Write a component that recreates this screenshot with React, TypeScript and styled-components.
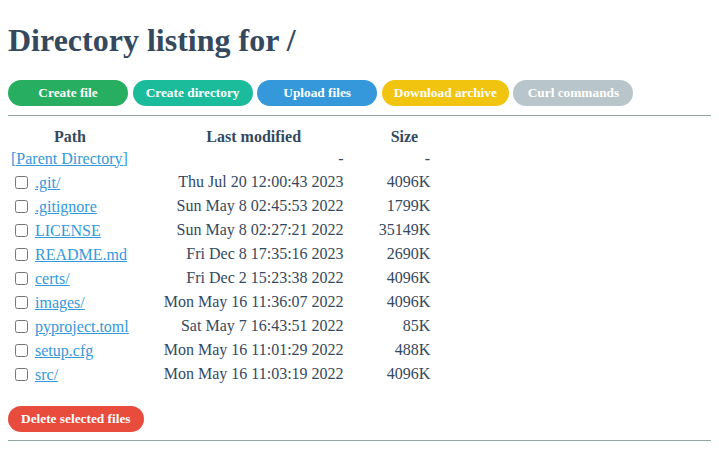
import styled, {createGlobalStyle} from "styled-components"

const GlobalStyle = createGlobalStyle`
    html, body {
        background: #fff;
    }
    body {
        margin: 8px;
        font-family: "Liberation Serif", "Times New Roman", serif;
        color: #34495e;
    }
`

const Title = styled.h1`
    font-size: 32px;
    font-weight: 700;
    margin: 14px 0 21px;
    color: #34495e;
`

const Toolbar = styled.div`
    display: flex;
    gap: 4.6px;
`

const PillButton = styled.button<{color: string}>`
    min-width: 120px;
    height: 26px;
    padding: 0 12px;
    border: 0;
    border-radius: 13px;
    background: ${(props) => props.color};
    color: #fff;
    font-family: "Liberation Serif", "Times New Roman", serif;
    font-size: 13.33px;
    font-weight: 700;
    cursor: pointer;
`

const Rule = styled.div<{gap?: number}>`
    height: 0;
    border-top: 1px solid #95a5a6;
    margin: ${(props) => props.gap ?? 9}px -8px 0 0;
`

const Listing = styled.table`
    border-spacing: 2px;
    font-size: 16px;
    margin-top: 8px;
`

const Head = styled.th<{wide?: boolean}>`
    font-weight: 700;
    text-align: center;
    padding: 2px 1px 0 ${(props) => (props.wide ? "32px" : "1px")};
`

const Cell = styled.td<{right?: boolean; wide?: boolean}>`
    text-align: ${(props) => (props.right ? "right" : "left")};
    padding: 1px 1px 1px ${(props) => (props.wide ? "32px" : "1px")};
    height: 20px;
    white-space: nowrap;
`

const ParentRow = styled.tr`
    & > td {
        height: 19px;
    }
`

const FileLink = styled.a`
    color: #3498db;
    text-decoration: underline;
`

const Check = styled.input`
    margin: 3px 3px 3px 4px;
    vertical-align: -1px;
`

const DeleteButton = styled(PillButton)`
    display: block;
    min-width: 0;
    padding: 0 13px;
    margin-top: 19px;
`

const files = [
    [".git/", "Thu Jul 20 12:00:43 2023", "4096K"],
    [".gitignore", "Sun May 8 02:45:53 2022", "1799K"],
    ["LICENSE", "Sun May 8 02:27:21 2022", "35149K"],
    ["README.md", "Fri Dec 8 17:35:16 2023", "2690K"],
    ["certs/", "Fri Dec 2 15:23:38 2022", "4096K"],
    ["images/", "Mon May 16 11:36:07 2022", "4096K"],
    ["pyproject.toml", "Sat May 7 16:43:51 2022", "85K"],
    ["setup.cfg", "Mon May 16 11:01:29 2022", "488K"],
    ["src/", "Mon May 16 11:03:19 2022", "4096K"],
]

export default function App() {
    return (
        <>
            <GlobalStyle />
            <Title>Directory listing for /</Title>
            <Toolbar>
                <PillButton color="#27ae60">Create file</PillButton>
                <PillButton color="#1abc9c">Create directory</PillButton>
                <PillButton color="#3498db">Upload files</PillButton>
                <PillButton color="#f1c40f">Download archive</PillButton>
                <PillButton color="#b8c5ca">Curl commands</PillButton>
            </Toolbar>
            <Rule />
            <Listing>
                <thead>
                    <tr>
                        <Head>Path</Head>
                        <Head wide>Last modified</Head>
                        <Head wide>Size</Head>
                    </tr>
                </thead>
                <tbody>
                    <ParentRow>
                        <Cell>
                            <FileLink href="#">[Parent Directory]</FileLink>
                        </Cell>
                        <Cell right wide>-</Cell>
                        <Cell right wide>-</Cell>
                    </ParentRow>
                    {files.map(([name, date, size]) => (
                        <tr key={name}>
                            <Cell>
                                <Check type="checkbox" />{" "}
                                <FileLink href="#">{name}</FileLink>
                            </Cell>
                            <Cell right wide>{date}</Cell>
                            <Cell right wide>{size}</Cell>
                        </tr>
                    ))}
                </tbody>
            </Listing>
            <DeleteButton color="#e74c3c">Delete selected files</DeleteButton>
            <Rule gap={8} />
        </>
    )
}
